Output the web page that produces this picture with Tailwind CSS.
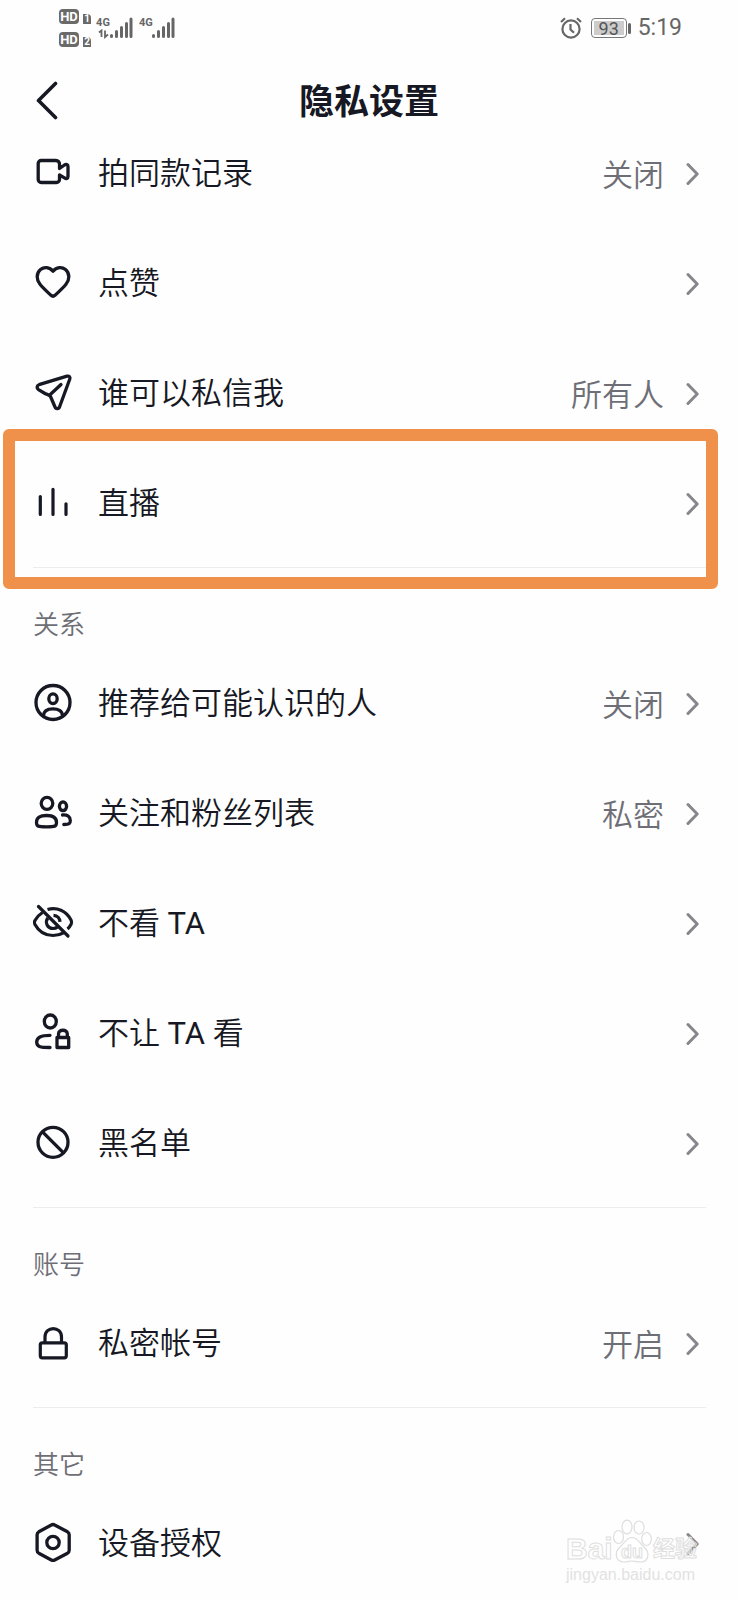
<!DOCTYPE html>
<html lang="zh-CN">
<head>
    <meta charset="UTF-8">
    <meta name="viewport" content="width=device-width, initial-scale=1.0">
    <title>隐私设置</title>
    <script src="https://cdn.jsdelivr.net/npm/@tailwindcss/browser@4"></script>
</head>
<body class="bg-[#fefefe] text-[#161823] font-[Roboto,'Noto_Sans_CJK_SC',sans-serif] overflow-x-hidden">

    <!-- Shared icons -->
    <svg class="hidden">
        <symbol id="chevron" viewBox="0 0 14 24">
            <path d="M2 2.500L11.200 12L2 21.500" fill="none" stroke="currentColor" stroke-width="3" stroke-linecap="round" stroke-linejoin="round"/>
        </symbol>
        <symbol id="signal" viewBox="0 0 24 22">
            <path d="M2.500 19.500v-1M7.500 19.500v-5M12.500 19.500v-9M17.500 19.500v-13M22 19.500v-17.500" fill="none" stroke="currentColor" stroke-width="3" stroke-linecap="round"/>
        </symbol>
    </svg>

    <!-- Status Bar -->
    <div class="h-14 pl-[59px] pr-14 flex items-center justify-between text-[#666]">
        <div class="flex items-center gap-[6px]">
            <div class="flex flex-col gap-2">
                <div class="flex items-end gap-1">
                    <span class="w-5 h-[15px] rounded bg-[#6a6a6a] text-white text-[13px] leading-[15px] font-bold text-center">HD</span>
                    <span class="w-2 h-[10px] rounded-tr bg-[#6a6a6a] text-white text-[10px] leading-[10px] font-bold text-center">1</span>
                </div>
                <div class="flex items-end gap-1">
                    <span class="w-5 h-[15px] rounded bg-[#6a6a6a] text-white text-[13px] leading-[15px] font-bold text-center">HD</span>
                    <span class="w-2 h-[10px] rounded-tr bg-[#6a6a6a] text-white text-[10px] leading-[10px] font-bold text-center">2</span>
                </div>
            </div>
            <div class="flex items-end">
                <div class="w-3 flex flex-col items-center">
                    <span class="text-[11px] leading-3 font-bold">4G</span>
                    <svg class="w-[11px] h-[10px]" viewBox="0 0 11 10" fill="none" stroke="currentColor" stroke-width="1.800">
                        <path d="M1 3.500L3.500 1.500V8M7 1.500V8L10 5.500"/>
                    </svg>
                </div>
                <svg class="w-6 h-[22px]"><use href="#signal"/></svg>
            </div>
            <div class="flex items-start">
                <span class="w-3 text-[11px] leading-3 font-bold">4G</span>
                <svg class="w-6 h-[22px]"><use href="#signal"/></svg>
            </div>
        </div>
        <div class="flex items-center gap-[7px]">
            <svg class="w-[22px] h-[22px]" viewBox="0 0 22 22" fill="none" stroke="currentColor" stroke-width="2.200">
                <circle cx="11" cy="12" r="8.600"/>
                <path d="M1 5L5 1.300M21 5L17 1.300M10.500 7v5.500l3.500 3.300"/>
            </svg>
            <div class="pl-0.5 flex items-center gap-px">
                <span class="w-9 h-5 rounded border border-[#777] p-[2px]">
                    <span class="block h-full bg-[#ccc] text-[#555] text-[18px] leading-[15px] text-center">93</span>
                </span>
                <span class="w-[3px] h-[11px] rounded-sm bg-[#666]"></span>
            </div>
            <span class="text-[23px] leading-7">5:19</span>
        </div>
    </div>

    <!-- Title -->
    <header class="h-[63px] px-[33px] flex items-start justify-between">
        <button aria-label="返回" class="w-8 pt-6">
            <svg class="w-8 h-10" viewBox="0 0 32 40" fill="none" stroke="currentColor" stroke-width="3.600" stroke-linecap="round" stroke-linejoin="round">
                <path d="M22.500 3.500L5.500 20.500L22.500 37.500"/>
            </svg>
        </button>
        <h1 class="pt-[22px] text-[35px] leading-[50px] font-bold">隐私设置</h1>
        <span class="w-8"></span>
    </header>

    <main>
        <!-- Interaction -->
        <section>
            <a href="#" class="h-[110px] pl-[33px] pr-[38px] flex items-center">
                <svg class="w-10 h-10 shrink-0 -mt-1" viewBox="0 0 40 40" fill="none" stroke="currentColor" stroke-width="3.300" stroke-linecap="round" stroke-linejoin="round">
                    <path d="M8.200 8.500H23a3.500 3.500 0 0 1 3.500 3.500v4.500L31.500 13c1.700-1.100 3.500-.500 3.500 1.500v10c0 2-1.800 2.500-3.500 1.400L26.500 23v4.500a3 3 0 0 1-3 3H8.200a3 3 0 0 1-3-3v-16a3 3 0 0 1 3-3z"/>
                </svg>
                <span class="flex-1 pl-[25px] text-[31px] leading-10 font-[350]">拍同款记录</span>
                <span class="pr-[22px] pt-1 text-[31px] leading-10 font-[350] text-[#6e6f76]">关闭</span>
                <svg class="w-[14px] h-6 text-[#86878c]"><use href="#chevron"/></svg>
            </a>
            <a href="#" class="h-[110px] pl-[33px] pr-[38px] flex items-center">
                <svg class="w-10 h-10 shrink-0 -mt-1" viewBox="0 0 40 40" fill="none" stroke="currentColor" stroke-width="3.300" stroke-linejoin="round">
                    <path d="M20 9.300C16.500 4.800 11 4.600 7.500 7.500C3 11.300 3.300 17.800 7 22.300C10.500 26.600 14 29.600 18 33.300Q20 35.200 22 33.300C26 29.600 29.500 26.600 33 22.300C36.700 17.800 37 11.300 32.500 7.500C29 4.600 23.500 4.800 20 9.300z"/>
                </svg>
                <span class="flex-1 pl-[25px] text-[31px] leading-10 font-[350]">点赞</span>
                <svg class="w-[14px] h-6 text-[#86878c]"><use href="#chevron"/></svg>
            </a>
            <a href="#" class="h-[110px] pl-[33px] pr-[38px] flex items-center">
                <svg class="w-10 h-10 shrink-0 -mt-1" viewBox="0 0 40 40" fill="none" stroke="currentColor" stroke-width="3.300" stroke-linecap="round" stroke-linejoin="round">
                    <path d="M34 4.200L6 12.700C3.500 13.600 3.600 16.300 5.500 17.600L12 21.500C14 22.600 16.500 22.500 17.500 24.500L21.800 34.500C22.800 37.500 25.800 37.300 26.700 34.500L36.800 7C37.500 5 36 3.600 34 4.200zM17 22.700L28 12.500"/>
                </svg>
                <span class="flex-1 pl-[25px] text-[31px] leading-10 font-[350]">谁可以私信我</span>
                <span class="pr-[22px] pt-1 text-[31px] leading-10 font-[350] text-[#6e6f76]">所有人</span>
                <svg class="w-[14px] h-6 text-[#86878c]"><use href="#chevron"/></svg>
            </a>
            <div class="relative">
                <a href="#" class="h-[110px] pl-[33px] pr-[38px] flex items-center">
                    <svg class="w-10 h-10 shrink-0 -mt-1" viewBox="0 0 40 40" fill="none" stroke="currentColor" stroke-width="3.200" stroke-linecap="round">
                        <path d="M7.300 14.500v18M20 7.300v25.200M33 21.800v10.700"/>
                    </svg>
                    <span class="flex-1 pl-[25px] text-[31px] leading-10 font-[350]">直播</span>
                    <svg class="w-[14px] h-6 text-[#86878c]"><use href="#chevron"/></svg>
                </a>
                <!-- Highlight frame -->
                <div class="absolute left-[3px] right-5 -top-5 -bottom-[30px] rounded-md border-[12px] border-[#f0914b] pointer-events-none"></div>
            </div>
        </section>

        <!-- Relations -->
        <section>
            <hr class="mt-2 ml-[33px] mr-8 border-[#ececed]">
            <h2 class="h-[81px] pt-[37px] pl-[33px] text-[26px] leading-10 font-[350] text-[#6e6f76]">关系</h2>
            <a href="#" class="h-[110px] pl-[33px] pr-[38px] flex items-center">
                <svg class="w-10 h-10 shrink-0 -mt-1" viewBox="0 0 40 40" fill="none" stroke="currentColor" stroke-width="3.300">
                    <circle cx="20" cy="20.500" r="17"/>
                    <ellipse cx="20" cy="16.700" rx="4.200" ry="4.800"/>
                    <path d="M10.500 34C10.500 28.500 15 26.800 20 26.800S29.500 28.500 29.500 34"/>
                </svg>
                <span class="flex-1 pl-[25px] text-[31px] leading-10 font-[350]">推荐给可能认识的人</span>
                <span class="pr-[22px] pt-1 text-[31px] leading-10 font-[350] text-[#6e6f76]">关闭</span>
                <svg class="w-[14px] h-6 text-[#86878c]"><use href="#chevron"/></svg>
            </a>
            <a href="#" class="h-[110px] pl-[33px] pr-[38px] flex items-center">
                <svg class="w-10 h-10 shrink-0 -mt-1" viewBox="0 0 40 40" fill="none" stroke="currentColor" stroke-width="3.300" stroke-linecap="round" stroke-linejoin="round">
                    <ellipse cx="14" cy="11.300" rx="5.800" ry="6"/>
                    <path d="M13.500 23.500C7 23.500 3.500 25.500 3.500 30.500C3.500 34.500 5 34.800 13.500 34.800S23.500 34.500 23.500 30.500C23.500 25.500 20 23.500 13.500 23.500z"/>
                    <ellipse cx="30" cy="14.300" rx="3.600" ry="4.400"/>
                    <path d="M29.500 23C34.500 22.700 37.300 24.500 37.300 28.500C37.300 31.800 36.500 32.500 30.800 32.500"/>
                </svg>
                <span class="flex-1 pl-[25px] text-[31px] leading-10 font-[350]">关注和粉丝列表</span>
                <span class="pr-[22px] pt-1 text-[31px] leading-10 font-[350] text-[#6e6f76]">私密</span>
                <svg class="w-[14px] h-6 text-[#86878c]"><use href="#chevron"/></svg>
            </a>
            <a href="#" class="h-[110px] pl-[33px] pr-[38px] flex items-center">
                <svg class="w-10 h-10 shrink-0 -mt-1 overflow-visible" viewBox="0 0 40 40" fill="none" stroke="currentColor" stroke-width="3.200">
                    <path d="M5.500 4.500L35 34" stroke-linecap="round"/>
                    <path d="M9.500 10.500C5.500 13 3.300 16 1.800 18.700Q1 20.500 1.800 22.200C5.500 29 12 33.500 20 33.500C24 33.500 27.500 32.500 30.500 30.800"/>
                    <path d="M14.500 7.500C23.500 4.800 33.500 8.500 38.200 18.400Q39 20.200 38.200 22C37.200 24 36 25.800 34.500 27"/>
                    <path d="M14.800 16C11.500 20.500 14.500 26.500 20 26.500C21.800 26.500 23.300 26 24.500 25M20.500 13.300C24.500 13.500 26.800 16.300 27 19.800"/>
                </svg>
                <span class="flex-1 pl-[25px] text-[31px] leading-10 font-[350]">不看 <span class="font-normal">TA</span></span>
                <svg class="w-[14px] h-6 text-[#86878c]"><use href="#chevron"/></svg>
            </a>
            <a href="#" class="h-[110px] pl-[33px] pr-[38px] flex items-center">
                <svg class="w-10 h-10 shrink-0 -mt-1" viewBox="0 0 40 40" fill="none" stroke="currentColor" stroke-width="3.300" stroke-linecap="round" stroke-linejoin="round">
                    <ellipse cx="17.300" cy="9.500" rx="6" ry="6.500"/>
                    <path d="M17 23.300C8 23.300 3.700 25.500 3.700 30C3.700 34.500 6.500 35.500 17 35.500M24 25.500H35.700V35.500H24zM25.500 25.500V22C25.500 17 34.300 17 34.300 22V25.500"/>
                </svg>
                <span class="flex-1 pl-[25px] text-[31px] leading-10 font-[350]">不让 <span class="font-normal">TA</span> 看</span>
                <svg class="w-[14px] h-6 text-[#86878c]"><use href="#chevron"/></svg>
            </a>
            <a href="#" class="h-[110px] pl-[33px] pr-[38px] flex items-center">
                <svg class="w-10 h-10 shrink-0 -mt-1" viewBox="0 0 40 40" fill="none" stroke="currentColor" stroke-width="3.300">
                    <circle cx="20" cy="20.300" r="15"/>
                    <path d="M9.500 9.800L30.500 30.800"/>
                </svg>
                <span class="flex-1 pl-[25px] text-[31px] leading-10 font-[350]">黑名单</span>
                <svg class="w-[14px] h-6 text-[#86878c]"><use href="#chevron"/></svg>
            </a>
        </section>

        <!-- Account -->
        <section>
            <hr class="mt-2 ml-[33px] mr-8 border-[#ececed]">
            <h2 class="h-[81px] pt-[37px] pl-[33px] text-[26px] leading-10 font-[350] text-[#6e6f76]">账号</h2>
            <a href="#" class="h-[110px] pl-[33px] pr-[38px] flex items-center">
                <svg class="w-10 h-10 shrink-0 -mt-1" viewBox="0 0 40 40" fill="none" stroke="currentColor" stroke-width="3.200">
                    <rect x="7.300" y="20.800" width="26" height="15" rx="2"/>
                    <path d="M12 20.800V15C12 3.700 28.500 3.700 28.500 15V20.800"/>
                </svg>
                <span class="flex-1 pl-[25px] text-[31px] leading-10 font-[350]">私密帐号</span>
                <span class="pr-[22px] pt-1 text-[31px] leading-10 font-[350] text-[#6e6f76]">开启</span>
                <svg class="w-[14px] h-6 text-[#86878c]"><use href="#chevron"/></svg>
            </a>
        </section>

        <!-- Others -->
        <section class="relative">
            <hr class="mt-2 ml-[33px] mr-8 border-[#ececed]">
            <h2 class="h-[81px] pt-[37px] pl-[33px] text-[26px] leading-10 font-[350] text-[#6e6f76]">其它</h2>
            <a href="#" class="h-[110px] pl-[33px] pr-[38px] flex items-center">
                <svg class="w-10 h-10 shrink-0 -mt-1" viewBox="0 0 40 40" fill="none" stroke="currentColor" stroke-width="3.300" stroke-linejoin="round">
                    <path d="M18.300 3Q20 2 21.700 3L34.500 9.800Q36.200 10.800 36.200 12.800V28.200Q36.200 30.200 34.500 31.200L21.700 38Q20 39 18.300 38L5.800 31.200Q4.100 30.200 4.100 28.200V12.800Q4.100 10.800 5.800 9.800z"/>
                    <circle cx="20" cy="20.500" r="6.200"/>
                </svg>
                <span class="flex-1 pl-[25px] text-[31px] leading-10 font-[350]">设备授权</span>
                <svg class="w-[14px] h-6 text-[#86878c]"><use href="#chevron"/></svg>
            </a>
            <!-- Watermark -->
            <div class="absolute right-10 bottom-3 w-[132px] text-white/40 whitespace-nowrap pointer-events-none font-['Liberation_Sans','Noto_Sans_CJK_SC',sans-serif] [-webkit-text-stroke:1px_#dedede]">
                <div class="flex items-end justify-between">
                    <span class="w-[45px] text-[30px] leading-7 font-bold">Bai</span>
                    <svg class="w-10 h-11 shrink-0 overflow-visible" viewBox="0 0 40 44" fill="#fff" fill-opacity=".6" stroke="#dedede" stroke-width="1.200">
                        <ellipse cx="6.500" cy="18" rx="5" ry="6.500"/>
                        <ellipse cx="15" cy="8" rx="5" ry="6.800"/>
                        <ellipse cx="27" cy="8.500" rx="5" ry="6.500"/>
                        <ellipse cx="34.500" cy="20" rx="4.800" ry="6.500"/>
                        <path d="M20 18.500C14 18.500 13 24 8 28C2 33 3.500 43 12 43C16 43 17 42 20 42S24 43 29 43C37 43 38 33 32 28C27 24 26 18.500 20 18.500z"/>
                        <text x="20" y="39" font-size="18" font-weight="bold" text-anchor="middle" stroke-width="1">du</text>
                    </svg>
                    <span class="w-[45px] text-[22px] leading-7 font-bold">经验</span>
                </div>
                <div class="text-[16px] leading-6 text-[#e2e2e2] [-webkit-text-stroke:0]">jingyan.baidu.com</div>
            </div>
        </section>
    </main>
</body>
</html>
